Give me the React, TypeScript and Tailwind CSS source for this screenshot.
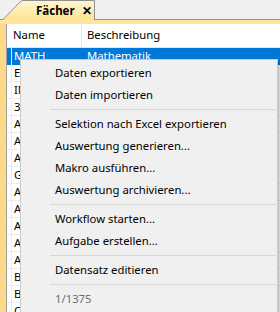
const rows = [
  ["MATH", "Mathematik"],
  ["ENGL", "Englisch"],
  ["INF", "Informatik"],
  ["3D", "3D Gestaltung"],
  ["ALG", "Algebra"],
  ["ANA", "Analysis"],
  ["ARB", "Arbeitslehre"],
  ["GEO", "Geografie"],
  ["AST", "Astronomie"],
  ["AUF", "Aufsatz"],
  ["ALT", "Altgriechisch"],
  ["ANG", "Angewandte Informatik"],
  ["ARC", "Architektur"],
  ["BIO", "Biologie"],
  ["BWL", "Betriebswirtschaft"],
  ["CHE", "Chemie"],
];

type MenuEntry = { label: string; disabled?: boolean } | "sep";

const menu: MenuEntry[] = [
  { label: "Daten exportieren" },
  { label: "Daten importieren" },
  "sep",
  { label: "Selektion nach Excel exportieren" },
  { label: "Auswertung generieren..." },
  { label: "Makro ausführen..." },
  { label: "Auswertung archivieren..." },
  "sep",
  { label: "Workflow starten..." },
  { label: "Aufgabe erstellen..." },
  "sep",
  { label: "Datensatz editieren" },
  "sep",
  { label: "1/1375", disabled: true },
];

function Tab() {
  return (
    <div className="relative ml-[2px] h-[21px] w-[93px]">
      <svg className="absolute inset-0" width="93" height="21" viewBox="0 0 93 21">
        <defs>
          <linearGradient id="tabfill" x1="0" y1="0" x2="0" y2="1">
            <stop offset="0" stopColor="#fff6d2" />
            <stop offset="1" stopColor="#ffe394" />
          </linearGradient>
        </defs>
        <path d="M0.5 21 L18.5 2.5 Q19.5 1.5 21 1.5 L92.5 1.5 L92.5 21" fill="url(#tabfill)" stroke="#8f8f8f" strokeWidth="1" />
      </svg>
      <div className="relative flex h-full items-center pt-[2px] pl-[34px]">
        <span className="text-[11.5px] font-bold text-black">Fächer</span>
        <span className="ml-[7px] text-[12px] font-bold leading-none text-black">✕</span>
      </div>
    </div>
  );
}

export default function App() {
  return (
    <div className="relative h-[312px] w-[280px] overflow-hidden bg-[#f0f0f0] font-['Noto_Sans',sans-serif] text-[11.3px]">
      {/* Tab strip */}
      <div className="flex h-[20px] items-end">
        <Tab />
      </div>

      {/* Panel */}
      <div className="-mt-[1px] border-t border-[#8f8f8f] bg-[#ffe49c]">
        <div className="h-[4px]" />
        <div className="flex">
          <div className="w-[6px] shrink-0 bg-[#fdd98a]" />
          <div className="flex-1 border-l border-[#a0a0a0] bg-white">
            {/* Header */}
            <div className="flex h-[24px] items-center border-b border-[#e5e5e5]">
              <div className="flex w-[75px] shrink-0 items-center self-stretch border-r border-[#e5e5e5] pl-[6px] text-black">Name</div>
              <div className="pl-[5px] text-black">Beschreibung</div>
            </div>
            {rows.map(([code, desc], i) => (
              <div
                key={code}
                className={
                  i === 0
                    ? "flex h-[17px] items-center bg-[#0078d7] text-white"
                    : "flex h-[17px] items-center border-b border-[#ececec] text-black"
                }
              >
                <div className="ml-[4px] w-[71px] shrink-0 border-l border-[#ececec] pl-[2px]">{code}</div>
                <div className="pl-[5px]">{desc}</div>
              </div>
            ))}
          </div>
        </div>
      </div>

      {/* Context menu */}
      <div className="absolute left-[20px] top-[59px] w-[258px] border border-[#cccccc] bg-[#f0f0f0] py-[2px] shadow-[2px_2px_2px_rgba(0,0,0,0.25)]">
        {menu.map((m, i) =>
          m === "sep" ? (
            <div key={i} className="flex h-[7px] items-center pl-[29px] pr-[1px]">
              <div className="h-[1px] w-full bg-[#d7d7d7]" />
            </div>
          ) : (
            <div
              key={i}
              className={
                m.disabled
                  ? "flex h-[22px] items-center pl-[34px] text-[#6d6d6d]"
                  : "flex h-[22px] items-center pl-[34px] text-black"
              }
            >
              {m.label}
            </div>
          )
        )}
      </div>
    </div>
  );
}
